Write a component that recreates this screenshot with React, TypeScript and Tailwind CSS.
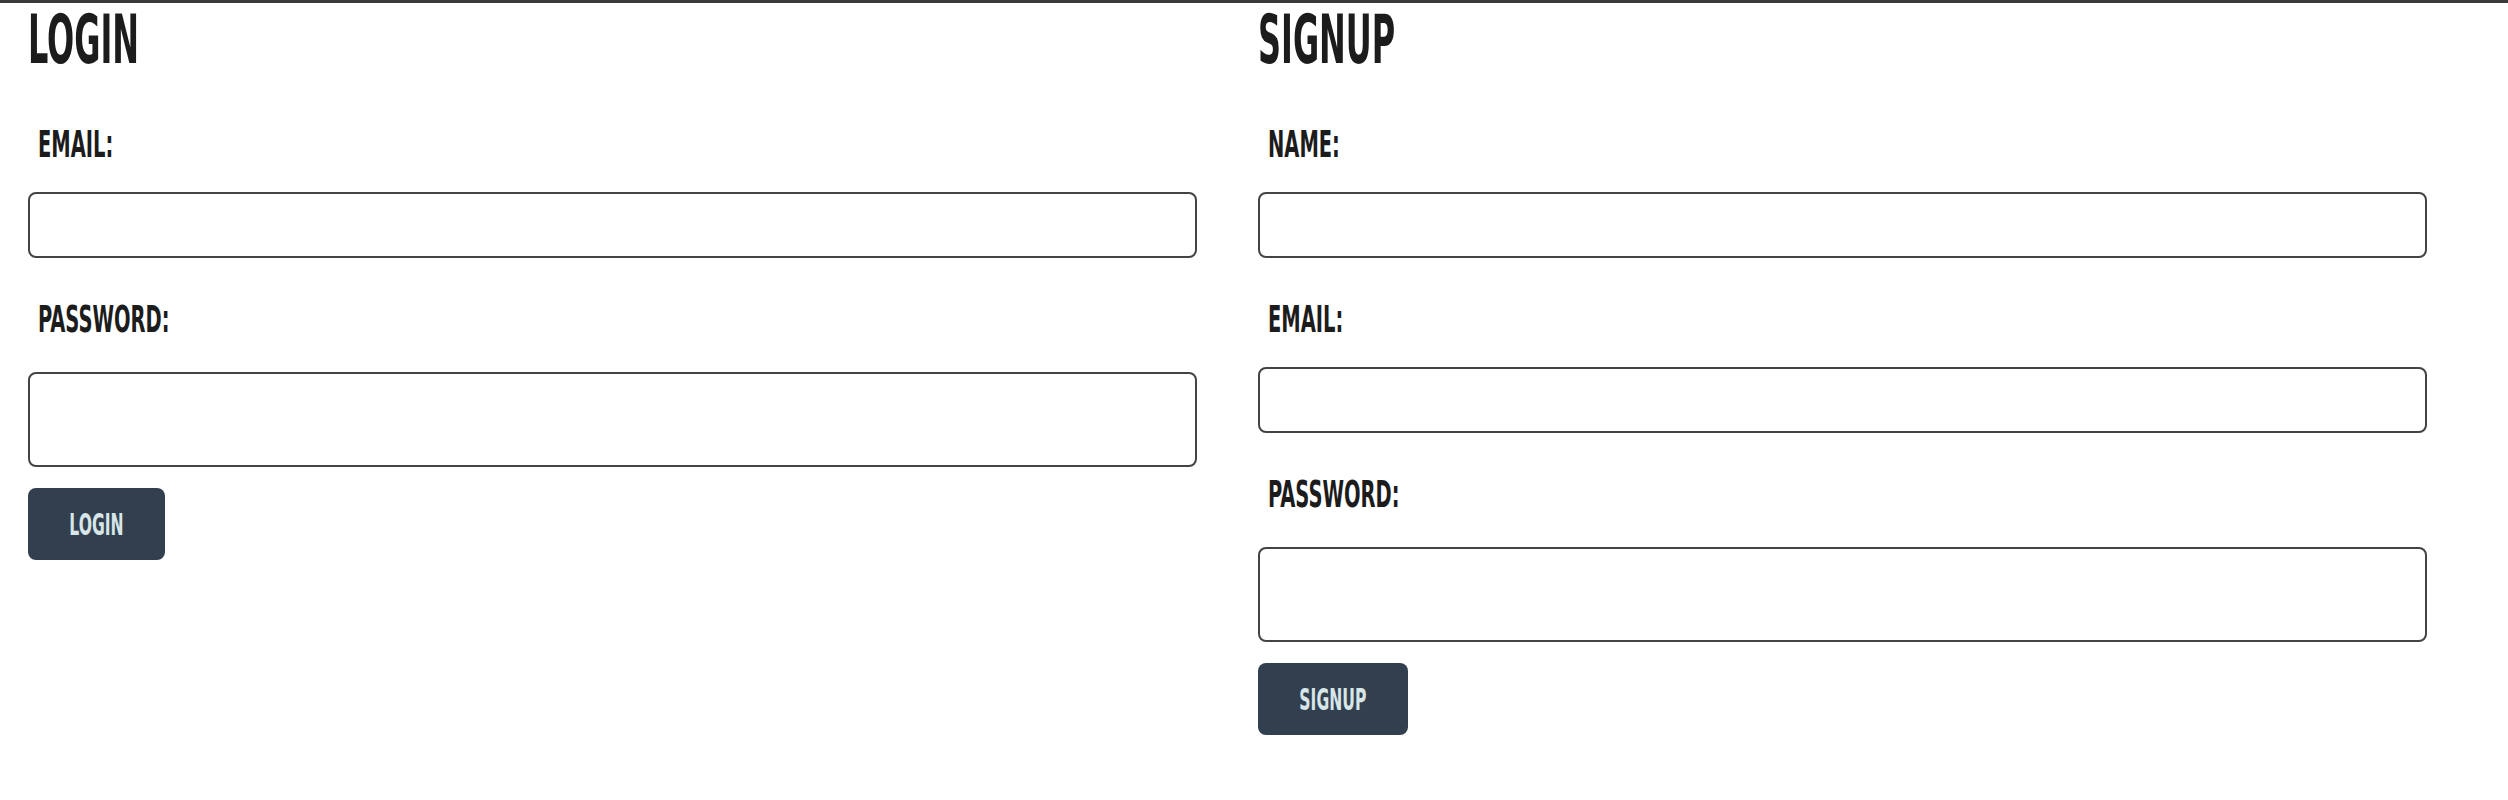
const font = "[font-family:'Liberation_Sans_Narrow','DejaVu_Sans_Condensed','Liberation_Sans',sans-serif]";

const Field = ({ label, tall, first }: { label: string; tall?: boolean; first?: boolean }) => (
  <div className="flex flex-col">
    <label
      className={`${first ? "mt-[51px]" : "mt-[42px]"} ml-2.5 block origin-left scale-x-[0.57] text-[38px] leading-none font-bold text-[#1c1c1c]`}
    >
      {label}
    </label>
    <input
      type={tall ? "password" : "text"}
      className={`${tall ? "mt-[34px] h-[95px]" : "mt-[29px] h-[66px]"} w-[95%] rounded-lg border-2 border-[#444] bg-white px-3 outline-none`}
    />
  </div>
);

const Form = ({ title, fields, btnWidth }: { title: string; fields: string[]; btnWidth: string }) => (
  <div className="flex flex-col">
    <h1 className="mt-[4px] block origin-left scale-x-[0.53] text-[67px] leading-none font-bold text-[#1c1c1c]">
      {title}
    </h1>
    {fields.map((f, i) => (
      <Field key={f} label={f} first={i === 0} tall={f === "PASSWORD:"} />
    ))}
    <div className="mt-[21px]">
      <button
        className={`flex h-[72px] ${btnWidth} items-center justify-center rounded-lg bg-[#323f4f] text-[31px] leading-none font-bold text-[#d8e6e8]`}
      >
        <span className="block scale-x-[0.56]">{title}</span>
      </button>
    </div>
  </div>
);

export default function App() {
  return (
    <div className={`min-h-screen w-full border-t-[3px] border-[#3a3a3a] bg-white ${font}`}>
      <div className="grid grid-cols-2 pr-[20px] pl-[28px]">
        <Form title="LOGIN" fields={["EMAIL:", "PASSWORD:"]} btnWidth="w-[137px]" />
        <Form title="SIGNUP" fields={["NAME:", "EMAIL:", "PASSWORD:"]} btnWidth="w-[150px]" />
      </div>
    </div>
  );
}
